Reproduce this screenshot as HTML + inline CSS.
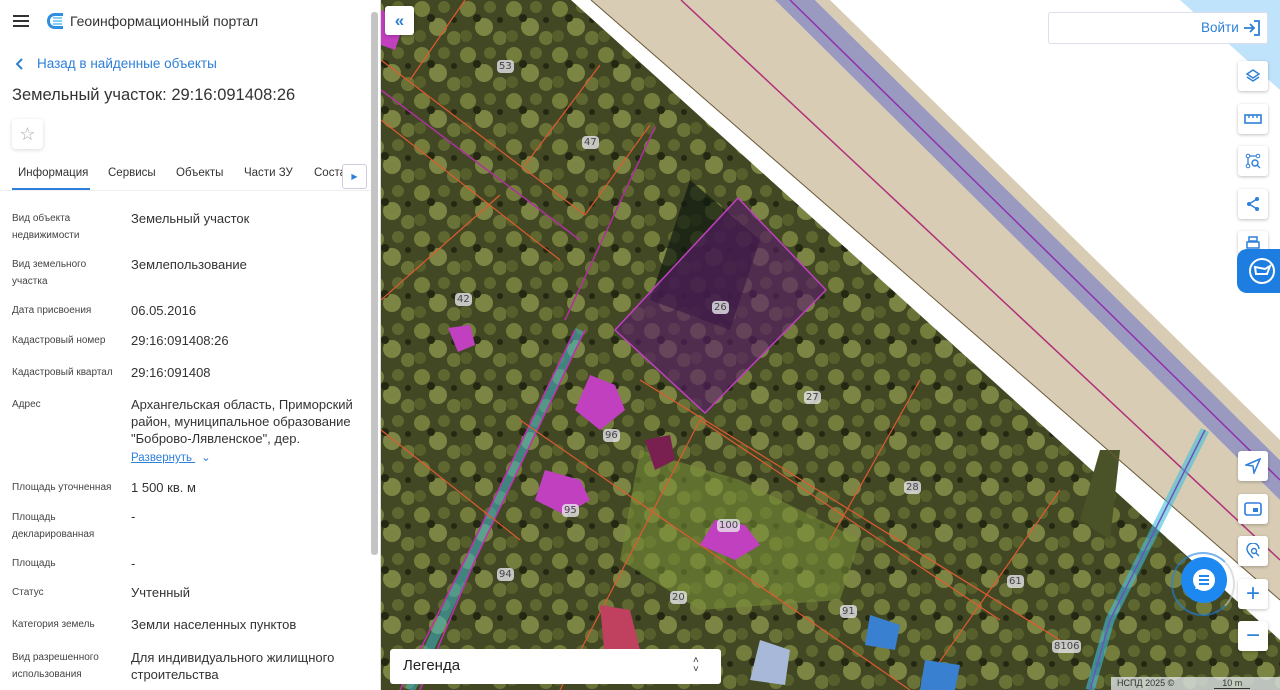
<!DOCTYPE html>
<html><head><meta charset="utf-8"><style>
*{box-sizing:border-box;margin:0;padding:0}
body{width:1280px;height:690px;overflow:hidden;font-family:"Liberation Sans",sans-serif;background:#fff;position:relative}
#left{position:absolute;left:0;top:0;width:381px;height:690px;background:#fff;border-right:1px solid #ddd;overflow:hidden}
.lbl{position:absolute;left:12px;font-size:10px;color:#444;line-height:17px}
.val{position:absolute;left:131px;font-size:13px;color:#333;line-height:17px;width:230px}
#map{position:absolute;left:381px;top:0;width:899px;height:690px;overflow:hidden;background:#3a4420}
.btn{position:absolute;width:30px;height:30px;background:#fff;border-radius:3px;box-shadow:0 1px 3px rgba(0,0,0,.25);display:flex;align-items:center;justify-content:center}
.num{position:absolute;font-family:"DejaVu Sans",sans-serif;font-size:10px;color:#444;background:rgba(230,230,235,.8);border-radius:4px;padding:0 2px;line-height:13px}
</style></head><body>
<div id="left">
 <svg style="position:absolute;left:13px;top:15px" width="16" height="12"><path d="M0 1h16M0 6h16M0 11h16" stroke="#333" stroke-width="2"/></svg>
 <svg style="position:absolute;left:46px;top:12px" width="18" height="18" viewBox="0 0 18 18"><path d="M9 1C4 1 1 4.5 1 9s3 8 8 8h8V14H9c-3 0-5-2-5-5s2-5 5-5h8V1z" fill="#2e8fe0"/><path d="M7 6h9M7 9h9M7 12h9" stroke="#5fc0f5" stroke-width="1.6"/></svg>
 <div style="position:absolute;left:70px;top:13px;font-size:14px;color:#333">Геоинформационный портал</div>
 <svg style="position:absolute;left:16px;top:58px" width="8" height="12"><path d="M6 1L1 6l5 5" stroke="#2d7fd8" stroke-width="2" fill="none"/></svg>
 <div style="position:absolute;left:37px;top:56px;font-size:13.5px;color:#2d7fd8">Назад в найденные объекты</div>
 <div style="position:absolute;left:12px;top:86px;font-size:16.5px;color:#333">Земельный участок: 29:16:091408:26</div>
 <div style="position:absolute;left:12px;top:119px;width:31px;height:30px;border-radius:4px;box-shadow:0 1px 4px rgba(0,0,0,.15);display:flex;align-items:center;justify-content:center;color:#aaa;font-size:18px">☆</div>
 <div style="position:absolute;top:167px;left:18px;font-size:11.5px;color:#333">Информация</div>
 <div style="position:absolute;top:188px;left:12px;width:78px;height:2px;background:#2d7fd8"></div>
 <div style="position:absolute;top:190px;left:0;width:370px;height:1px;background:#eee"></div>
 <div style="position:absolute;top:167px;left:108px;font-size:11.5px;color:#333">Сервисы</div>
 <div style="position:absolute;top:167px;left:176px;font-size:11.5px;color:#333">Объекты</div>
 <div style="position:absolute;top:167px;left:244px;font-size:11.5px;color:#333">Части ЗУ</div>
 <div style="position:absolute;top:167px;left:314px;font-size:11.5px;color:#333">Соста</div>
 <div style="position:absolute;top:164px;left:342px;width:25px;height:25px;background:#fff;border:1px solid #ccd;border-radius:3px;color:#2d7fd8;font-size:8px;display:flex;align-items:center;justify-content:center">▶</div>
 <div class="lbl" style="top:210px">Вид объекта<br>недвижимости</div><div class="val" style="top:210px">Земельный участок</div>
 <div class="lbl" style="top:256px">Вид земельного<br>участка</div><div class="val" style="top:256px">Землепользование</div>
 <div class="lbl" style="top:302px">Дата присвоения</div><div class="val" style="top:302px">06.05.2016</div>
 <div class="lbl" style="top:332px">Кадастровый номер</div><div class="val" style="top:332px">29:16:091408:26</div>
 <div class="lbl" style="top:364px">Кадастровый квартал</div><div class="val" style="top:364px">29:16:091408</div>
 <div class="lbl" style="top:396px">Адрес</div><div class="val" style="top:396px">Архангельская область, Приморский район, муниципальное образование "Боброво-Лявленское", дер.</div>
 <div style="position:absolute;left:131px;top:450px;font-size:11.5px;color:#2d7fd8;text-decoration:underline">Развернуть <span style="text-decoration:none;display:inline-block;margin-left:6px">⌄</span></div>
 <div class="lbl" style="top:479px">Площадь уточненная</div><div class="val" style="top:479px">1 500 кв. м</div>
 <div class="lbl" style="top:509px">Площадь<br>декларированная</div><div class="val" style="top:508px">-</div>
 <div class="lbl" style="top:555px">Площадь</div><div class="val" style="top:555px">-</div>
 <div class="lbl" style="top:584px">Статус</div><div class="val" style="top:584px">Учтенный</div>
 <div class="lbl" style="top:616px">Категория земель</div><div class="val" style="top:616px">Земли населенных пунктов</div>
 <div class="lbl" style="top:649px">Вид разрешенного<br>использования</div><div class="val" style="top:649px">Для индивидуального жилищного строительства</div>
 <div style="position:absolute;left:371px;top:12px;width:7px;height:543px;background:#c4c4c4;border-radius:3px"></div>
</div>
<div id="map">
<svg width="899" height="690" viewBox="381 0 899 690" style="position:absolute;left:0;top:0">
 <defs>
  <pattern id="tr" width="46" height="46" patternUnits="userSpaceOnUse">
   <rect width="46" height="46" fill="#4a5228"/>
   <circle cx="8" cy="9" r="8" fill="#8a9448"/><circle cx="30" cy="7" r="6" fill="#6e7838"/>
   <circle cx="24" cy="27" r="9" fill="#949e50"/><circle cx="6" cy="36" r="6" fill="#646e32"/>
   <circle cx="40" cy="38" r="7" fill="#7e8842"/><circle cx="17" cy="18" r="4" fill="#262a14"/>
   <circle cx="40" cy="20" r="3" fill="#262a14"/>
  </pattern>
 </defs>
 <rect x="381" y="0" width="899" height="690" fill="url(#tr)"/>
 <rect x="381" y="0" width="899" height="690" fill="#1e2410" opacity=".2"/>
 <path d="M690 180 L760 240 L730 330 L650 300Z" fill="#101a10" opacity=".7"/>
 <path d="M640 450 L740 480 L860 540 L840 600 L700 610 L620 560Z" fill="#7a9238" opacity=".55"/>
 <!-- white strip and road -->
 <path d="M571 0 L1280 0 L1280 640Z" fill="#fff"/>
 <path d="M591 0 L775 0 L1280 500 L1280 600Z" fill="#d8ccb4"/>
 <path d="M1100 450 L1120 450 L1110 540 L1080 520Z" fill="#4a5228"/>
 <path d="M775 0 L815 0 L1280 460 L1280 500Z" fill="#9a9ac0"/>
 <path d="M815 0 L830 0 L1280 440 L1280 460Z" fill="#d8ccb4"/>
 <path d="M1180 0 L1280 0 L1280 90Z" fill="#bfe3fb"/>
 <path d="M591 0 L1280 600" stroke="#6b5a3a" stroke-width="1"/>
 <path d="M681 0 L1280 560" stroke="#b0307a" stroke-width="1.5"/>
 <path d="M790 0 L1280 480" stroke="#9030b0" stroke-width="1.5"/>
 <!-- blue pipe -->
 <path d="M1205 430 L1140 560 L1110 620 L1090 690" stroke="#40c0d8" stroke-width="9" fill="none" opacity=".6"/>
 <path d="M1205 430 L1110 620 L1090 690" stroke="#7050c0" stroke-width="1.5" fill="none"/>
 <path d="M580 330 L470 560 L410 690" stroke="#40b8c8" stroke-width="10" fill="none" opacity=".55"/>
 <path d="M585 330 L475 560 L420 690" stroke="#c030b0" stroke-width="1.5" fill="none"/>
 <path d="M575 330 L465 560 L400 690" stroke="#c030b0" stroke-width="1.5" fill="none"/>
 <!-- parcels -->
 <path d="M615 330 L738 198 L826 290 L705 413Z" fill="#5a1a6a" fill-opacity=".6" stroke="#c040c0" stroke-width="1.5"/>
 <g stroke="#e05a30" stroke-width="1.2" fill="none">
  <path d="M381 60 L585 215 M381 120 L560 260 M465 0 L410 80 M600 65 L525 165 M500 195 L381 300 M650 125 L585 215"/>
  <path d="M520 420 L910 690 M640 380 L1060 640 M700 420 L560 690 M920 380 L830 540 M1060 490 L920 690 M381 430 L520 540 M700 420 L1000 620"/>
 </g>
 <path d="M381 90 L580 240 M655 127 L565 320" stroke="#b030a0" stroke-width="1.5"/>
 <!-- houses -->
 <g fill="#c040c0"><path d="M590 375 L615 385 L625 410 L600 430 L575 410Z"/><path d="M545 470 L580 480 L590 500 L565 515 L535 500Z"/><path d="M715 520 L745 525 L760 545 L735 560 L700 545Z"/><path d="M448 328 L470 325 L475 345 L458 352Z"/><path d="M381 10 L405 20 L395 50 L381 45Z"/></g>
 <path d="M645 440 L670 435 L675 460 L655 470Z" fill="#7a2050"/>
 <path d="M600 605 L630 610 L640 650 L605 660Z" fill="#c04060"/>
 <path d="M870 615 L900 625 L895 650 L865 645Z" fill="#3a80d0"/>
 <path d="M925 660 L960 665 L955 690 L920 690Z" fill="#3a80d0"/>
 <path d="M760 640 L790 650 L785 685 L750 680Z" fill="#a8b8d8"/>
</svg>
 <div class="num" style="left:116px;top:60px">53</div>
 <div class="num" style="left:201px;top:136px">47</div>
 <div class="num" style="left:74px;top:293px">42</div>
 <div class="num" style="left:331px;top:301px">26</div>
 <div class="num" style="left:423px;top:391px">27</div>
 <div class="num" style="left:222px;top:429px">96</div>
 <div class="num" style="left:523px;top:481px">28</div>
 <div class="num" style="left:181px;top:504px">95</div>
 <div class="num" style="left:336px;top:519px">100</div>
 <div class="num" style="left:116px;top:568px">94</div>
 <div class="num" style="left:289px;top:591px">20</div>
 <div class="num" style="left:626px;top:575px">61</div>
 <div class="num" style="left:459px;top:605px">91</div>
 <div class="num" style="left:671px;top:640px">8106</div>
 <div class="btn" style="left:4px;top:6px;width:29px;height:29px;color:#2d7fd8;font-size:17px;font-weight:bold">«</div>
 <div style="position:absolute;left:667px;top:12px;width:220px;height:32px;background:#fff;border:1px solid #dde;border-radius:3px"></div>
 <div style="position:absolute;left:820px;top:20px;font-size:13.5px;color:#2d7fd8">Войти</div>
 <svg style="position:absolute;left:862px;top:19px" width="18" height="18"><path d="M1 9h10M7 5l4 4-4 4M11 2h5v14h-5" stroke="#2d7fd8" stroke-width="1.8" fill="none"/></svg>
 <div class="btn" style="left:857px;top:61px"><svg width="16" height="16"><path d="M8 2l6 4-6 4-6-4z M2 9l6 4 6-4" stroke="#2d7fd8" stroke-width="1.5" fill="none"/></svg></div>
 <div class="btn" style="left:857px;top:104px"><svg width="18" height="10"><rect x="1" y="1" width="16" height="8" stroke="#2d7fd8" stroke-width="1.6" fill="none"/><path d="M5 1v3M9 1v3M13 1v3" stroke="#2d7fd8" stroke-width="1.4"/></svg></div>
 <div class="btn" style="left:857px;top:146px"><svg width="16" height="16"><circle cx="3" cy="3" r="1.8" stroke="#2d7fd8" fill="none"/><circle cx="13" cy="3" r="1.8" stroke="#2d7fd8" fill="none"/><circle cx="3" cy="13" r="1.8" stroke="#2d7fd8" fill="none"/><circle cx="10" cy="10" r="3" stroke="#2d7fd8" stroke-width="1.4" fill="none"/><path d="M12 12l3 3M3 5v6M5 3h6" stroke="#2d7fd8" stroke-width="1.3"/></svg></div>
 <div class="btn" style="left:857px;top:189px"><svg width="16" height="16"><circle cx="12" cy="3" r="2" fill="#2d7fd8"/><circle cx="4" cy="8" r="2" fill="#2d7fd8"/><circle cx="12" cy="13" r="2" fill="#2d7fd8"/><path d="M12 3L4 8l8 5" stroke="#2d7fd8" stroke-width="1.4" fill="none"/></svg></div>
 <div class="btn" style="left:857px;top:231px;height:24px"><svg width="16" height="14"><path d="M4 1h8v4H4zM2 6h12v6H2z" stroke="#2d7fd8" stroke-width="1.5" fill="none"/></svg></div>
 <div style="position:absolute;left:856px;top:249px;width:50px;height:44px;background:#1d7de0;border-radius:10px 0 0 10px;display:flex;align-items:center;justify-content:center"><svg width="30" height="30"><circle cx="15" cy="15" r="12" stroke="#fff" stroke-width="2" fill="none"/><path d="M8 11l10 2 5 -3-3 8H9z" stroke="#fff" stroke-width="2" fill="none"/></svg></div>
 <div class="btn" style="left:857px;top:451px"><svg width="16" height="16"><path d="M15 1L1 7l7 1 1 7z" stroke="#2d7fd8" stroke-width="1.5" fill="none"/></svg></div>
 <div class="btn" style="left:857px;top:494px"><svg width="18" height="14"><rect x="1" y="1" width="16" height="12" rx="2" stroke="#2d7fd8" stroke-width="1.6" fill="none"/><rect x="9" y="6" width="5" height="4" fill="#2d7fd8"/></svg></div>
 <div class="btn" style="left:857px;top:536px"><svg width="16" height="16"><path d="M8 15C3 10 2 8 2 6a6 6 0 0112 0" stroke="#2d7fd8" stroke-width="1.4" fill="none"/><circle cx="9" cy="8" r="2.5" stroke="#2d7fd8" stroke-width="1.4" fill="none"/><path d="M11 10l3 3" stroke="#2d7fd8" stroke-width="1.4"/></svg></div>
 <div class="btn" style="left:857px;top:579px;color:#2d7fd8;font-size:24px">+</div>
 <div class="btn" style="left:857px;top:621px;color:#2d7fd8;font-size:24px">−</div>
 <div style="position:absolute;left:790px;top:552px;width:64px;height:64px;border-radius:50%;border:2px solid rgba(30,130,230,.6);border-right-color:rgba(200,200,200,.6)"></div>
 <div style="position:absolute;left:800px;top:557px;width:46px;height:46px;border-radius:50%;background:#1d88f0;display:flex;align-items:center;justify-content:center"><svg width="26" height="26"><circle cx="13" cy="13" r="11" fill="#fff"/><path d="M4 22l3-6 4 5z" fill="#fff"/><path d="M8 9h10M8 13h10M8 17h10" stroke="#1d88f0" stroke-width="2"/></svg></div>
 <div style="position:absolute;left:9px;top:649px;width:331px;height:35px;background:#fff;border-radius:3px"></div>
 <div style="position:absolute;left:22px;top:657px;font-size:15px;color:#222">Легенда</div>
 <div style="position:absolute;left:312px;top:656px;font-size:10px;color:#333;line-height:9px;text-align:center">˄<br>˅</div>
 <div style="position:absolute;left:730px;top:677px;width:169px;height:13px;background:rgba(230,235,240,.75);font-size:9px;color:#333;padding-left:6px;line-height:13px">НСПД 2025 ©<span style="margin-left:40px;border-bottom:1px solid #333;padding:0 8px">10 m</span></div>
</div>
</body></html>
